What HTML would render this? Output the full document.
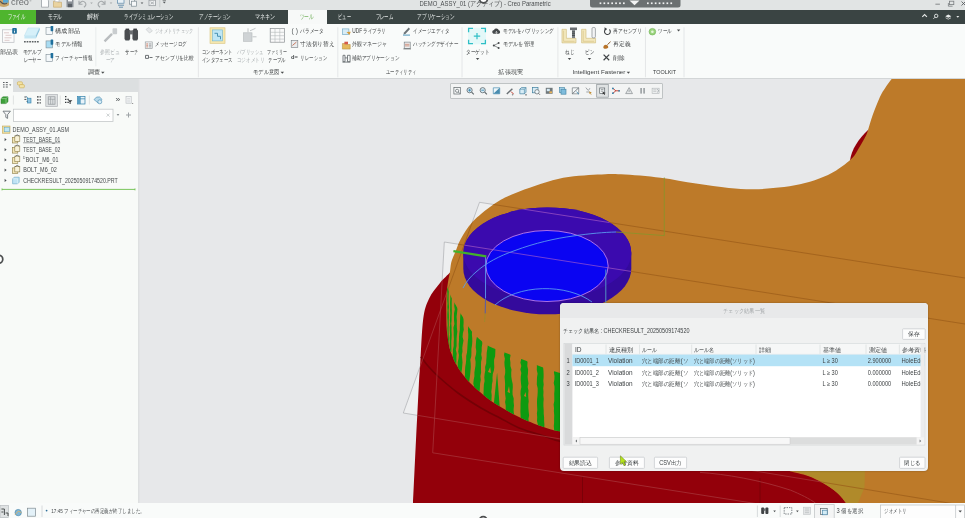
<!DOCTYPE html>
<html lang="ja">
<head>
<meta charset="utf-8">
<title>DEMO_ASSY_01 - Creo Parametric</title>
<style>
*{box-sizing:border-box;margin:0;padding:0}
html,body{width:965px;height:518px;overflow:hidden;background:#e7e8ea;font-family:"Liberation Sans",sans-serif;}
body{position:relative}
.abs{position:absolute}
svg{position:absolute;left:0;top:0;overflow:visible}
svg text{font-family:"Liberation Sans",sans-serif}
#s-title,#s-tabs,#s-ribbon,#s-left,#s-viewtb,#s-dialog,#s-status{filter:blur(0.35px)}
#titlebar{left:0;top:0;width:965px;height:10px;background:#e1e4e4}
#tabbar{left:0;top:10px;width:965px;height:13.7px;background:#3a4443}
#filetab{left:0;top:0;width:36px;height:13.7px;background:#4fb52e}
#activetab{left:288px;top:0;width:39px;height:14px;background:#f7f9f8}
#ribbon{left:0;top:23.7px;width:965px;height:55.3px;background:#f9fbfa;border-bottom:1px solid #d3d6d7}
#leftpanel{left:0;top:79px;width:138px;height:424px;background:#f8faf8}
#lp-tabs{left:0;top:0;width:138px;height:13px;background:#dcdfe0}
#lp-tab1{left:0;top:0;width:13px;height:13px;background:#f8faf8}
#splitter{left:138px;top:79px;width:2px;height:424px;background:linear-gradient(90deg,#dcdedf,#e5e6e8)}
#viewport{left:140px;top:79px;width:825px;height:424px;background:#e7e8ea;overflow:hidden}
#statusbar{left:0;top:503px;width:965px;height:15px;background:#f9fbfa}
#viewtb{left:449.5px;top:82.6px;width:213.8px;height:16px;background:#f3f4f4;border:1px solid #bfc3c4;border-radius:1px}
#dialog{left:560px;top:303px;width:368px;height:168px;background:#f0f1f1;border-radius:4px;box-shadow:0 0 2px rgba(0,0,0,.35);overflow:hidden}
#dlg-title{left:0;top:0;width:368px;height:15px;background:#e8e9ea}
</style>
</head>
<body>
<div id="titlebar" class="abs">
<svg id="s-title" width="965" height="10" viewBox="0 0 965 10">
<g transform="translate(0 -1.8)"><path d="M0 0 h9 v7 q-4 3 -9 1 z" fill="#c9a66a"/><rect x="3.0" y="0.0" width="5.5" height="4.5" fill="#56a7d6"/><path d="M0 3 q3 4 7 2" fill="none" stroke="#555" stroke-width="1.2"/><text x="11.0" y="6.6" font-size="9.5" fill="#6b6e70" textLength="18.0" lengthAdjust="spacingAndGlyphs">creo</text><text x="29.5" y="3.5" font-size="3.0" fill="#6b6e70" textLength="2.0" lengthAdjust="spacingAndGlyphs">®</text><path d="M41.5 0 h4.5 l2.5 2.5 v6.5 h-7 z" fill="#fdfdfd" stroke="#9aa0a4" stroke-width="0.8"/><path d="M53.5 3 h3 l1 1 h4 v5 h-8 z" fill="#ead3a0" stroke="#c4a468" stroke-width="0.6"/><path d="M55 0.5 h4 v3 h-4 z" fill="#fff" stroke="#aaa" stroke-width="0.5"/><path d="M66.5 0 h7 v9 h-7 z" fill="#8a9096"/><rect x="68.0" y="0.0" width="4.0" height="3.2" fill="#f4f6f7"/><rect x="68.0" y="5.6" width="4.0" height="3.4" fill="#5a6066"/><path d="M79 2.5 v3.5 h3.5 M79.4 5.6 q3 -4.5 6 -1 q1.5 2.5 -1.5 4.4" fill="none" stroke="#a4a8aa" stroke-width="1.1"/><path d="M90.2 4.2 h2.6 l-1.3 1.5 z" fill="#a4a8aa"/><path d="M105 2.5 v3.5 h-3.5 M104.6 5.6 q-3 -4.5 -6 -1 q-1.5 2.5 1.5 4.4" fill="none" stroke="#a4a8aa" stroke-width="1.1"/><path d="M109.7 4.2 h2.6 l-1.3 1.5 z" fill="#a4a8aa"/><rect x="117.5" y="0.5" width="6.5" height="4.5" fill="#e8f1f7" stroke="#5a88a8" stroke-width="0.7"/><path d="M118 7 h6 M119 9 h4" fill="none" stroke="#5a88a8" stroke-width="0.9"/><rect x="129.5" y="1.0" width="5.0" height="5.0" fill="#f6f8f9" stroke="#7c8a92" stroke-width="0.7"/><rect x="131.5" y="3.0" width="5.0" height="5.0" fill="#f6f8f9" stroke="#7c8a92" stroke-width="0.7"/><path d="M140.6 4.2 h2.8 l-1.4 1.6 z" fill="#55595b"/><rect x="149.0" y="2.0" width="6.5" height="5.5" fill="#eef0f1" stroke="#8c9296" stroke-width="0.7"/><path d="M150.5 3.5 l3.5 2.5 m0 -2.5 l-3.5 2.5" fill="none" stroke="#8c9296" stroke-width="0.6"/><path d="M159.8 0.5 v8.5" fill="none" stroke="#b6babc" stroke-width="0.6"/><path d="M162.8 3.6 h3.0 l-1.5 1.8 z" fill="#55595b"/><path d="M162.6 2.4 h3.4" fill="none" stroke="#55595b" stroke-width="0.6"/></g>
<text x="419.6" y="6.0" font-size="6.8" fill="#4a4d4f" textLength="131.0" lengthAdjust="spacingAndGlyphs">DEMO_ASSY_01 (アクティブ) - Creo Parametric</text>
<path d="M590 0 h90.5 v5 q0 2.5 -2.5 2.5 h-85.5 q-2.5 0 -2.5 -2.5 z" fill="#6b7071"/>
<rect x="599.6" y="2.4" width="1.7" height="1.7" fill="#f2f3f3"/>
<rect x="647.0" y="2.4" width="1.7" height="1.7" fill="#f2f3f3"/>
<rect x="603.5" y="2.4" width="1.7" height="1.7" fill="#f2f3f3"/>
<rect x="650.9" y="2.4" width="1.7" height="1.7" fill="#f2f3f3"/>
<rect x="607.4" y="2.4" width="1.7" height="1.7" fill="#f2f3f3"/>
<rect x="654.8" y="2.4" width="1.7" height="1.7" fill="#f2f3f3"/>
<rect x="611.3" y="2.4" width="1.7" height="1.7" fill="#f2f3f3"/>
<rect x="658.7" y="2.4" width="1.7" height="1.7" fill="#f2f3f3"/>
<rect x="615.2" y="2.4" width="1.7" height="1.7" fill="#f2f3f3"/>
<rect x="662.6" y="2.4" width="1.7" height="1.7" fill="#f2f3f3"/>
<rect x="619.1" y="2.4" width="1.7" height="1.7" fill="#f2f3f3"/>
<rect x="666.5" y="2.4" width="1.7" height="1.7" fill="#f2f3f3"/>
<rect x="623.0" y="2.4" width="1.7" height="1.7" fill="#f2f3f3"/>
<rect x="670.4" y="2.4" width="1.7" height="1.7" fill="#f2f3f3"/>
<path d="M629.5 0.6 h10 l-5 4.6 z" fill="#f2f3f3"/>
<path d="M935.4 4.2 h4.5" fill="none" stroke="#7a7e80" stroke-width="0.9"/>
<rect x="949.6" y="1.2" width="4.2" height="3.4" fill="none" stroke="#7a7e80" stroke-width="0.8"/>
<path d="M948.4 3 v3.2 h4.2" fill="none" stroke="#7a7e80" stroke-width="0.8"/>
<path d="M961.5 1.5 l4 4 m0 -4 l-4 4" fill="none" stroke="#5a5e60" stroke-width="0.9"/>
</svg>
</div>
<div id="tabbar" class="abs"><div id="filetab" class="abs"></div><div id="activetab" class="abs"></div>
<svg id="s-tabs" width="965" height="14" viewBox="0 10 965 14">
<text x="7.5" y="19.4" font-size="6.6" fill="#eef1f0" textLength="17.5" lengthAdjust="spacingAndGlyphs">ファイル</text>
<text x="48.0" y="19.4" font-size="6.6" fill="#eef1f0" textLength="14.0" lengthAdjust="spacingAndGlyphs">モデル</text>
<text x="87.0" y="19.4" font-size="6.6" fill="#eef1f0" textLength="12.5" lengthAdjust="spacingAndGlyphs">解析</text>
<text x="124.4" y="19.4" font-size="6.6" fill="#eef1f0" textLength="49.0" lengthAdjust="spacingAndGlyphs">ライブシミュレーション</text>
<text x="199.0" y="19.4" font-size="6.6" fill="#eef1f0" textLength="32.0" lengthAdjust="spacingAndGlyphs">アノテーション</text>
<text x="255.0" y="19.4" font-size="6.6" fill="#eef1f0" textLength="20.6" lengthAdjust="spacingAndGlyphs">マネキン</text>
<text x="299.7" y="19.4" font-size="6.6" fill="#6fae58" textLength="14.2" lengthAdjust="spacingAndGlyphs">ツール</text>
<text x="338.3" y="19.4" font-size="6.6" fill="#eef1f0" textLength="12.4" lengthAdjust="spacingAndGlyphs">ビュー</text>
<text x="375.6" y="19.4" font-size="6.6" fill="#eef1f0" textLength="17.4" lengthAdjust="spacingAndGlyphs">フレーム</text>
<text x="417.4" y="19.4" font-size="6.6" fill="#eef1f0" textLength="37.3" lengthAdjust="spacingAndGlyphs">アプリケーション</text>
<path d="M922.3 16.9 l2.3 -2.3 l2.3 2.3" fill="none" stroke="#e8ebea" stroke-width="1.1"/>
<circle cx="936.2" cy="15.9" r="1.7" fill="none" stroke="#e8ebea" stroke-width="0.9"/>
<path d="M935 17.2 l-1.6 1.6" fill="none" stroke="#e8ebea" stroke-width="0.9"/>
<path d="M945.3 16.2 l3 -1.6 l3 1.6 l-3 1.6 z" fill="#e8ebea"/>
<path d="M945.6 17.8 l2.7 1.4 l2.7 -1.4" fill="none" stroke="#e8ebea" stroke-width="0.7"/>
<path d="M956.3 16.0 h3.0 l-1.5 1.8 z" fill="#e8ebea"/>
</svg>
</div>
<div id="ribbon" class="abs">
<svg id="s-ribbon" width="965" height="55.3" viewBox="0 23.7 965 55.3">
<rect x="2.5" y="29.5" width="11.5" height="12.5" fill="#fbfbfb" stroke="#b8bcc0" stroke-width="0.7"/>
<path d="M4 32.5 h5 M5.5 35 h6 M4.5 37.5 h7 M4.5 40 h5" fill="none" stroke="#c7a7a7" stroke-width="0.6"/>
<rect x="12.2" y="27.8" width="4.6" height="5.6" fill="#1f6f9c" rx="0.8"/>
<path d="M14.5 29.4 v0.6 M14.5 30.6 v1.8" fill="none" stroke="#fff" stroke-width="0.9"/>
<text x="0.3" y="53.3" font-size="6.4" fill="#3a3d3e" textLength="18.2" lengthAdjust="spacingAndGlyphs">部品表</text>
<path d="M24.4 35.4 l3.6 -7.8 h11.4 l-3.6 7.8 z" fill="#d6f0f9" stroke="#b4dbea" stroke-width="0.5"/>
<path d="M24.4 35.4 h11.4 v2.8 h-11.4 z" fill="#c4e6f3"/>
<path d="M35.8 35.4 l3.6 -7.8 q0.8 1.4 0 2.8 l-3.6 7.8 z" fill="#8cc3dc"/>
<path d="M24 41.4 h15.6" fill="none" stroke="#5d6264" stroke-width="1.6" stroke-dasharray="1.7 0.9"/>
<text x="22.5" y="53.3" font-size="6.4" fill="#3a3d3e" textLength="19.5" lengthAdjust="spacingAndGlyphs">モデルプ</text>
<text x="23.7" y="61.3" font-size="6.4" fill="#3a3d3e" textLength="17.2" lengthAdjust="spacingAndGlyphs">レーヤー</text>
<path d="M95.8 27 V66" fill="none" stroke="#e6e8e9" stroke-width="0.8"/>
<path d="M104.5 41 l4 -4 M108 37.5 l4 -4" fill="none" stroke="#b9bdbf" stroke-width="2.4"/>
<rect x="112.5" y="28.0" width="4.6" height="6.0" fill="#c9cdcf" rx="0.8"/>
<text x="100.3" y="53.3" font-size="6.4" fill="#a9aeb0" textLength="19.7" lengthAdjust="spacingAndGlyphs">参照ビュ</text>
<text x="105.5" y="61.3" font-size="6.4" fill="#a9aeb0" textLength="9.3" lengthAdjust="spacingAndGlyphs">ーア</text>
<rect x="125.6" y="28.3" width="3.5" height="3.0" fill="#33363a"/>
<rect x="133.4" y="28.3" width="3.5" height="3.0" fill="#33363a"/>
<rect x="125.3" y="37.5" width="4.0" height="3.0" fill="#8b8f92"/>
<rect x="133.2" y="37.5" width="4.0" height="3.0" fill="#8b8f92"/>
<text x="125.3" y="53.3" font-size="6.4" fill="#3a3d3e" textLength="12.9" lengthAdjust="spacingAndGlyphs">サーチ</text>
<rect x="145.2" y="41.6" width="7.0" height="6.6" fill="#f1f3f4" stroke="#8d9397" stroke-width="0.6"/>
<path d="M146.4 43.6 h1.4 M146.4 45 h1.4 M146.4 46.6 h1.4" fill="none" stroke="#c05a3a" stroke-width="0.8"/>
<path d="M148.8 43.6 h2.6 M148.8 45 h2.6 M148.8 46.6 h2.6" fill="none" stroke="#70767a" stroke-width="0.6"/>
<text x="88.2" y="73.7" font-size="6.4" fill="#3a3d3e" textLength="12.5" lengthAdjust="spacingAndGlyphs">調査</text>
<path d="M101.1 71.4 h3.4 l-1.7 2.0 z" fill="#4a4d4e"/>
<path d="M198.4 27 V77" fill="none" stroke="#dfe2e3" stroke-width="0.8"/>
<rect x="210.0" y="27.5" width="15.0" height="15.5" fill="#f6e7ae" stroke="#d8c27a" stroke-width="0.6"/>
<rect x="212.6" y="29.6" width="9.8" height="11.0" fill="#bfe6f4" stroke="#6fb5d2" stroke-width="0.6"/>
<path d="M214.5 33 h3 v3 h3 v3" fill="none" stroke="#3c89ab" stroke-width="0.9"/>
<text x="202.0" y="53.3" font-size="6.4" fill="#3a3d3e" textLength="30.5" lengthAdjust="spacingAndGlyphs">コンポーネント</text>
<text x="202.0" y="61.3" font-size="6.4" fill="#3a3d3e" textLength="30.5" lengthAdjust="spacingAndGlyphs">インタフェース</text>
<rect x="243.5" y="32.5" width="8.5" height="8.5" fill="#cfd3d5" stroke="#b3b8ba" stroke-width="0.6"/>
<path d="M248 32 v-4 M252.5 36.5 h4 M250 30.5 l5.5 -2.5" fill="none" stroke="#bcc0c2" stroke-width="0.9"/>
<text x="237.0" y="53.3" font-size="6.4" fill="#a9aeb0" textLength="26.6" lengthAdjust="spacingAndGlyphs">パブリッシュ</text>
<text x="236.6" y="61.3" font-size="6.4" fill="#a9aeb0" textLength="27.8" lengthAdjust="spacingAndGlyphs">コジオメトリ</text>
<rect x="270.2" y="28.3" width="14.4" height="13.6" fill="#fafafa" stroke="#8a8f93" stroke-width="0.7"/>
<path d="M270.2 32 h14.4 M270.2 35.4 h14.4 M270.2 38.8 h14.4 M275 28.3 v13.6 M279.8 28.3 v13.6" fill="none" stroke="#b4b8bb" stroke-width="0.6"/>
<text x="266.7" y="53.3" font-size="6.4" fill="#3a3d3e" textLength="19.8" lengthAdjust="spacingAndGlyphs">ファミリー</text>
<text x="268.2" y="61.3" font-size="6.4" fill="#3a3d3e" textLength="17.6" lengthAdjust="spacingAndGlyphs">テーブル</text>
<text x="253.0" y="73.7" font-size="6.4" fill="#3a3d3e" textLength="26.5" lengthAdjust="spacingAndGlyphs">モデル意図</text>
<path d="M280.6 71.4 h3.4 l-1.7 2.0 z" fill="#4a4d4e"/>
<path d="M337.8 27 V77" fill="none" stroke="#dfe2e3" stroke-width="0.8"/>
<rect x="342.3" y="28.6" width="6.6" height="5.8" fill="#d7ecf6" stroke="#6aa3c0" stroke-width="0.6"/>
<path d="M346.5 31.6 l3 3 l1.2 -3.2 z" fill="#d59a3a"/>
<path d="M342.4 43.2 h3 l0.8 1 h4 v4.6 h-7.8 z" fill="#e5b95c" stroke="#ab8536" stroke-width="0.5"/>
<rect x="344.4" y="41.4" width="3.6" height="2.6" fill="#d65a4a"/>
<path d="M343 55 h2 v6.4 h-2 z M347.5 55 h2.6 v6.4 h-2.6 z M342.4 61.8 h8" fill="none" stroke="#5d6367" stroke-width="0.8"/>
<path d="M345 57.6 h2.5" fill="none" stroke="#5d6367" stroke-width="0.8"/>
<path d="M403.4 34.2 l2 -0.6 l4.6 -5 l-1.3 -1.3 l-4.7 5 z" fill="#6b7377"/>
<path d="M403 34.8 h7" fill="none" stroke="#3f8fb5" stroke-width="0.9"/>
<rect x="404.2" y="41.8" width="6.0" height="6.2" fill="#eceff0" stroke="#6f7579" stroke-width="0.6"/>
<path d="M405 44 h4.4 M405 45.6 h4.4" fill="none" stroke="#c05a3a" stroke-width="0.6"/>
<path d="M403.4 48.6 h7.6" fill="none" stroke="#5d6367" stroke-width="0.8"/>
<text x="386.0" y="73.7" font-size="6.4" fill="#3a3d3e" textLength="30.5" lengthAdjust="spacingAndGlyphs">ユーティリティ</text>
<path d="M462.0 27 V77" fill="none" stroke="#dfe2e3" stroke-width="0.8"/>
<rect x="468.0" y="27.5" width="18.0" height="16.5" fill="#e3f8f8"/>
<path d="M468.6 32 v-4 h4.4 M485.4 32 v-4 h-4.4 M468.6 39.4 v4 h4.4 M485.4 39.4 v4 h-4.4" fill="none" stroke="#2fbfc6" stroke-width="1.3"/>
<path d="M477 32.6 v6.4 M473.8 35.8 h6.4" fill="none" stroke="#2fbfc6" stroke-width="1.2"/>
<text x="466.0" y="53.3" font-size="6.4" fill="#3a3d3e" textLength="23.2" lengthAdjust="spacingAndGlyphs">ターゲット</text>
<path d="M475.9 57.6 h3.4 l-1.7 2.0 z" fill="#4a4d4e"/>
<path d="M493.4 33.4 a2 2 0 0 1 0.6 -3.8 a2.6 2.6 0 0 1 4.8 0.4 a1.8 1.8 0 0 1 0.2 3.4 z" fill="#45494b"/>
<path d="M496.4 33.6 v-2.4 m-1 1 l1 -1 l1 1" fill="none" stroke="#fff" stroke-width="0.6"/>
<circle cx="493.8" cy="45.2" r="1" fill="#45494b"/><circle cx="498.6" cy="42.8" r="1" fill="#45494b"/><circle cx="498.6" cy="47.6" r="1" fill="#45494b"/>
<path d="M493.8 45.2 l4.8 -2.4 M493.8 45.2 l4.8 2.4" fill="none" stroke="#45494b" stroke-width="0.6"/>
<text x="498.4" y="73.7" font-size="6.4" fill="#3a3d3e" textLength="24.5" lengthAdjust="spacingAndGlyphs">拡張現実</text>
<path d="M557.9 27 V77" fill="none" stroke="#dfe2e3" stroke-width="0.8"/>
<path d="M562.0 29 h4.4 v9 h9.6 v4.6 h-14 z" fill="#f3e8bd" stroke="#cdb977" stroke-width="0.6"/><path d="M563.6 30.4 v10.6 h11" fill="none" stroke="#d3be7c" stroke-width="0.6"/><rect x="570.0" y="27.2" width="7.0" height="2.6" fill="#6a6f72"/><rect x="572.0" y="29.8" width="3.0" height="8.0" fill="#7b8084"/><path d="M572.0 31.6 h3 M572.0 33.4 h3 M572.0 35.2 h3" fill="none" stroke="#2c3033" stroke-width="0.6"/>
<text x="565.2" y="53.3" font-size="6.4" fill="#3a3d3e" textLength="8.8" lengthAdjust="spacingAndGlyphs">ねじ</text>
<path d="M567.8 57.6 h3.4 l-1.7 2.0 z" fill="#4a4d4e"/>
<path d="M581.6 29 h4.4 v9 h9.6 v4.6 h-14 z" fill="#f3e8bd" stroke="#cdb977" stroke-width="0.6"/><path d="M583.2 30.4 v10.6 h11" fill="none" stroke="#d3be7c" stroke-width="0.6"/><rect x="592.0" y="27.2" width="3.4" height="10.4" fill="#f3f4f5" stroke="#6f7579" stroke-width="0.6" rx="1.2"/>
<text x="585.2" y="53.3" font-size="6.4" fill="#3a3d3e" textLength="8.8" lengthAdjust="spacingAndGlyphs">ピン</text>
<path d="M587.8 57.6 h3.4 l-1.7 2.0 z" fill="#4a4d4e"/>
<path d="M609.4 29.2 a2.9 2.9 0 1 1 -3 -0.6" fill="none" stroke="#3f4345" stroke-width="1.1"/>
<path d="M604.6 27 l2.4 1.6 l-2.4 1.8 z" fill="#3f4345"/>
<path d="M603.4 47.6 q-0.4 -3 2.6 -3.2 q2.6 0.6 2.2 3 q-2.4 2 -4.8 0.2 z" fill="#b8742a"/>
<path d="M607.4 44.4 l3.2 -3" fill="none" stroke="#8b5a2b" stroke-width="1"/>
<text x="572.6" y="73.7" font-size="6.2" fill="#3a3d3e" textLength="52.8" lengthAdjust="spacingAndGlyphs">Intelligent Fastener</text>
<path d="M626.7 71.4 h3.4 l-1.7 2.0 z" fill="#4a4d4e"/>
<path d="M645.5 27 V77" fill="none" stroke="#dfe2e3" stroke-width="0.8"/>
<circle cx="652.4" cy="31.4" r="3.3" fill="#9bd47e" stroke="#6bb04f" stroke-width="0.6"/><circle cx="652.4" cy="31.4" r="1.3" fill="#e6f5dc"/>
<text x="653.0" y="73.7" font-size="6.2" fill="#3a3d3e" textLength="23.2" lengthAdjust="spacingAndGlyphs">TOOLKIT</text>
<path d="M684.0 27 V77" fill="none" stroke="#dfe2e3" stroke-width="0.8"/>
<g transform="translate(0 -1.4)"><rect x="46.0" y="28.5" width="6.5" height="7.0" fill="#f4f8fa" stroke="#7d8c94" stroke-width="0.6"/><rect x="50.6" y="27.1" width="2.6" height="5.2" fill="#1f6f9c" rx="0.6"/><text x="55.2" y="33.8" font-size="6.4" fill="#3a3d3e" textLength="24.8" lengthAdjust="spacingAndGlyphs">構成部品</text><rect x="46.0" y="42.0" width="6.5" height="7.0" fill="#a9dcf2" stroke="#7d8c94" stroke-width="0.6"/><rect x="50.6" y="40.6" width="2.6" height="5.2" fill="#1f6f9c" rx="0.6"/><text x="55.2" y="47.5" font-size="6.4" fill="#3a3d3e" textLength="27.2" lengthAdjust="spacingAndGlyphs">モデル情報</text><rect x="46.0" y="55.5" width="6.5" height="7.0" fill="#f4f8fa" stroke="#7d8c94" stroke-width="0.6"/><rect x="50.6" y="54.1" width="2.6" height="5.2" fill="#1f6f9c" rx="0.6"/><text x="55.2" y="60.9" font-size="6.4" fill="#3a3d3e" textLength="37.0" lengthAdjust="spacingAndGlyphs">フィーチャー情報</text><rect x="124.5" y="30.5" width="5.6" height="10.5" fill="#4a4d50" rx="1.5"/><rect x="132.4" y="30.5" width="5.6" height="10.5" fill="#4a4d50" rx="1.5"/><rect x="129.5" y="31.5" width="3.5" height="4.0" fill="#6a6d70"/><path d="M146 30.5 l3 -2 l3.4 3.6 l-3 2 z" fill="#e8eaeb" stroke="#c3c7c9" stroke-width="0.6"/><text x="155.2" y="33.8" font-size="6.4" fill="#a9aeb0" textLength="38.0" lengthAdjust="spacingAndGlyphs">ジオメトリチェック</text><text x="155.2" y="47.5" font-size="6.4" fill="#3a3d3e" textLength="31.3" lengthAdjust="spacingAndGlyphs">メッセージログ</text><path d="M145.5 56.5 h3 v3 h-3 z M149.5 58.6 h3" fill="none" stroke="#5d6367" stroke-width="0.9"/><text x="155.2" y="60.9" font-size="6.4" fill="#3a3d3e" textLength="38.8" lengthAdjust="spacingAndGlyphs">アセンブリを比較</text><text x="291.5" y="33.9" font-size="6.6" fill="#555a5c" textLength="6.4" lengthAdjust="spacingAndGlyphs">( )</text><text x="300.5" y="33.8" font-size="6.4" fill="#3a3d3e" textLength="23.0" lengthAdjust="spacingAndGlyphs">パラメータ</text><rect x="291.2" y="41.8" width="6.6" height="6.6" fill="#e9ecee" stroke="#70767a" stroke-width="0.6"/><path d="M292.4 46.6 l4 -3.4" fill="none" stroke="#c05a3a" stroke-width="0.8"/><text x="300.5" y="47.5" font-size="6.4" fill="#3a3d3e" textLength="34.0" lengthAdjust="spacingAndGlyphs">寸法切り替え</text><text x="291.0" y="60.6" font-size="6.2" fill="#45494b" textLength="6.8" lengthAdjust="spacingAndGlyphs" font-weight="bold">d=</text><text x="300.5" y="60.9" font-size="6.4" fill="#3a3d3e" textLength="26.7" lengthAdjust="spacingAndGlyphs">リレーション</text><text x="352.3" y="33.8" font-size="6.4" fill="#3a3d3e" textLength="33.7" lengthAdjust="spacingAndGlyphs">UDF ライブラリ</text><text x="352.3" y="47.5" font-size="6.4" fill="#3a3d3e" textLength="35.0" lengthAdjust="spacingAndGlyphs">外観マネージャ</text><text x="352.3" y="60.9" font-size="6.4" fill="#3a3d3e" textLength="47.0" lengthAdjust="spacingAndGlyphs">補助アプリケーション</text><text x="413.3" y="33.8" font-size="6.4" fill="#3a3d3e" textLength="35.8" lengthAdjust="spacingAndGlyphs">イメージエディタ</text><text x="413.3" y="47.5" font-size="6.4" fill="#3a3d3e" textLength="45.0" lengthAdjust="spacingAndGlyphs">ハッチングデザイナー</text><text x="503.0" y="33.8" font-size="6.4" fill="#3a3d3e" textLength="51.0" lengthAdjust="spacingAndGlyphs">モデルをパブリッシング</text><text x="503.0" y="47.5" font-size="6.4" fill="#3a3d3e" textLength="31.0" lengthAdjust="spacingAndGlyphs">モデルを管理</text><text x="613.2" y="33.8" font-size="6.4" fill="#3a3d3e" textLength="28.8" lengthAdjust="spacingAndGlyphs">再アセンブリ</text><text x="613.2" y="47.5" font-size="6.4" fill="#3a3d3e" textLength="17.2" lengthAdjust="spacingAndGlyphs">再定義</text><path d="M603.6 55.8 l5.6 5.6 m0 -5.6 l-5.6 5.6" fill="none" stroke="#3f4345" stroke-width="1.2"/><text x="613.2" y="60.9" font-size="6.4" fill="#3a3d3e" textLength="11.4" lengthAdjust="spacingAndGlyphs">削除</text><text x="658.4" y="33.8" font-size="6.4" fill="#3a3d3e" textLength="13.6" lengthAdjust="spacingAndGlyphs">ツール</text><path d="M676.9 30.6 h3.4 l-1.7 2.0 z" fill="#4a4d4e"/></g>
</svg>
</div>
<div id="leftpanel" class="abs"><div id="lp-tabs" class="abs"><div id="lp-tab1" class="abs"></div></div>
<svg id="s-left" width="138" height="424" viewBox="0 79 138 424">
<path d="M3 82.5 h1.6 M3 84.8 h1.6 M3 87 h1.6 M5.8 82.5 h2 M5.8 84.8 h2 M5.8 87 h2" fill="none" stroke="#4a4f52" stroke-width="0.9"/>
<path d="M9.1 84.4 h2.2 l-1.1 1.3 z" fill="#4a4d4e"/>
<rect x="17.4" y="81.8" width="5.0" height="3.2" fill="#f3e3a6" stroke="#c9a94e" stroke-width="0.6" rx="1"/>
<rect x="19.4" y="84.6" width="5.0" height="3.2" fill="#f3e3a6" stroke="#c9a94e" stroke-width="0.6" rx="1"/>
<path d="M1 98.6 l2 -1.8 h5 v5 l-2 1.8 h-5 z" fill="#3da03a" stroke="#2a7a2a" stroke-width="0.5"/>
<path d="M1 98.6 h5 v5 M6 98.6 l2 -1.8" fill="none" stroke="#bfe6b8" stroke-width="0.5"/>
<path d="M13.4 95.5 v9" fill="none" stroke="#d5d8d9" stroke-width="0.7"/>
<path d="M24.4 97 h2 M24.4 99.4 h2 M26.6 101.4 h2" fill="none" stroke="#4a4f52" stroke-width="1"/>
<rect x="27.6" y="98.2" width="3.4" height="4.8" fill="#8fc4e2" stroke="#2f7fa8" stroke-width="0.6"/>
<path d="M26 96.4 l2 1.4" fill="none" stroke="#2f7fa8" stroke-width="0.6"/>
<path d="M37 96.8 h1.6 M37 99.8 h1.6 M37 102.8 h1.6 M39.6 96.8 h1.2 M39.6 99.8 h1.2 M39.6 102.8 h1.2" fill="none" stroke="#33373a" stroke-width="1.3"/>
<rect x="45.8" y="94.6" width="11.6" height="11.8" fill="#dfe2e3" stroke="#aeb3b6" stroke-width="0.7"/>
<rect x="48.2" y="96.8" width="6.8" height="7.4" fill="none" stroke="#8f9599" stroke-width="0.7"/>
<path d="M48.2 99.2 h6.8 M50.6 96.8 v7.4 M52.8 99.2 v5" fill="none" stroke="#8f9599" stroke-width="0.6"/>
<path d="M60.2 95.5 v9" fill="none" stroke="#d5d8d9" stroke-width="0.7"/>
<path d="M65 96.6 h1.4 M65 99.4 h1.4 M65 102.4 h1.4 M67.4 99.4 h1.4 M67.4 102.4 h1.4" fill="none" stroke="#33373a" stroke-width="1.1"/>
<path d="M67.8 100.2 h4.6 l-1.8 1.8 v2 h-1 v-2 z" fill="#33373a"/>
<rect x="77.6" y="96.4" width="7.4" height="7.6" fill="#e8f3f9" stroke="#2f7fa8" stroke-width="0.7"/>
<path d="M77.6 98.8 h7.4 M80.2 96.4 v7.6" fill="none" stroke="#2f7fa8" stroke-width="0.7"/>
<rect x="77.6" y="96.4" width="2.6" height="7.6" fill="#5aa0c4"/>
<path d="M89.4 95.5 v9" fill="none" stroke="#d5d8d9" stroke-width="0.7"/>
<path d="M94 99.6 l2.6 -2.6 h3 l2.4 2.4 l-3.6 3.8 z" fill="#b7d9ea" stroke="#3f87ad" stroke-width="0.6"/>
<circle cx="99.8" cy="101.8" r="2" fill="#d7ecf6" stroke="#3f87ad" stroke-width="0.6"/>
<text x="115.4" y="102.2" font-size="7.0" fill="#4a4f52" textLength="4.8" lengthAdjust="spacingAndGlyphs">»</text>
<rect x="126.0" y="96.6" width="5.2" height="6.6" fill="#f2f4f5" stroke="#b5babd" stroke-width="0.6"/>
<path d="M127.2 98.6 h2.8 M127.2 100.2 h2.8 M127.2 101.8 h2.8" fill="none" stroke="#c3c7c9" stroke-width="0.5"/>
<path d="M131.7 103.0 h1.8 l-0.9 1.1 z" fill="#777"/>
<path d="M3 111.2 h7.4 l-2.8 3.4 v3.8 l-1.8 -1 v-2.8 z" fill="#f4f6f7" stroke="#5d6569" stroke-width="0.8"/>
<rect x="13.4" y="109.2" width="99.6" height="12.2" fill="#ffffff" stroke="#c3c7c9" stroke-width="0.8"/>
<path d="M106.6 113.6 l3 3 m0 -3 l-3 3" fill="none" stroke="#b9bec0" stroke-width="0.7"/>
<path d="M116.7 114.2 h2.6 l-1.3 1.6 z" fill="#5d6569"/>
<path d="M126 115 h5 M128.5 112.5 v5" fill="none" stroke="#9ea3a6" stroke-width="1"/>
<rect x="2.4" y="126.0" width="7.6" height="7.2" fill="#f1df9e" stroke="#b99a44" stroke-width="0.5"/><rect x="4.2" y="127.2" width="5.2" height="4.6" fill="#bfe6f4" stroke="#5a9fc0" stroke-width="0.5"/>
<text x="12.6" y="131.9" font-size="6.5" fill="#45494b" textLength="56.4" lengthAdjust="spacingAndGlyphs">DEMO_ASSY_01.ASM</text>
<path d="M4.6 138.0 l2 1.6 l-2 1.6 z" fill="#4a4f52"/>
<rect x="12.4" y="137.4" width="5.4" height="5.6" fill="#f3e7b8" stroke="#8a7a44" stroke-width="0.6"/><rect x="14.8" y="135.8" width="5.0" height="5.6" fill="#f8f2d8" stroke="#8a7a44" stroke-width="0.6"/><path d="M15.2 136.2 l2 -1.4 l2 1.4" fill="none" stroke="#4a4f52" stroke-width="0.7"/>
<text x="23.2" y="141.9" font-size="6.5" fill="#45494b" textLength="37.0" lengthAdjust="spacingAndGlyphs">TEST_BASE_01</text>
<path d="M23.2 142.8 h37.0" fill="none" stroke="#45494b" stroke-width="0.5"/>
<path d="M4.6 148.1 l2 1.6 l-2 1.6 z" fill="#4a4f52"/>
<rect x="12.4" y="147.5" width="5.4" height="5.6" fill="#f3e7b8" stroke="#8a7a44" stroke-width="0.6"/><rect x="14.8" y="145.9" width="5.0" height="5.6" fill="#f8f2d8" stroke="#8a7a44" stroke-width="0.6"/><path d="M15.2 146.3 l2 -1.4 l2 1.4" fill="none" stroke="#4a4f52" stroke-width="0.7"/>
<text x="23.2" y="152.0" font-size="6.5" fill="#45494b" textLength="37.0" lengthAdjust="spacingAndGlyphs">TEST_BASE_02</text>
<path d="M4.6 158.3 l2 1.6 l-2 1.6 z" fill="#4a4f52"/>
<rect x="12.4" y="157.7" width="5.4" height="5.6" fill="#f3e7b8" stroke="#8a7a44" stroke-width="0.6"/><rect x="14.8" y="156.1" width="5.0" height="5.6" fill="#f8f2d8" stroke="#8a7a44" stroke-width="0.6"/><path d="M15.2 156.5 l2 -1.4 l2 1.4" fill="none" stroke="#4a4f52" stroke-width="0.7"/>
<text x="23.0" y="159.3" font-size="3.6" fill="#45494b" textLength="2.4" lengthAdjust="spacingAndGlyphs">D</text>
<text x="25.8" y="162.2" font-size="6.5" fill="#45494b" textLength="32.6" lengthAdjust="spacingAndGlyphs">BOLT_M6_01</text>
<path d="M4.6 168.5 l2 1.6 l-2 1.6 z" fill="#4a4f52"/>
<rect x="12.4" y="167.9" width="5.4" height="5.6" fill="#f3e7b8" stroke="#8a7a44" stroke-width="0.6"/><rect x="14.8" y="166.3" width="5.0" height="5.6" fill="#f8f2d8" stroke="#8a7a44" stroke-width="0.6"/><path d="M15.2 166.7 l2 -1.4 l2 1.4" fill="none" stroke="#4a4f52" stroke-width="0.7"/>
<text x="23.2" y="172.4" font-size="6.5" fill="#45494b" textLength="33.6" lengthAdjust="spacingAndGlyphs">BOLT_M6_02</text>
<path d="M4.6 178.8 l2 1.6 l-2 1.6 z" fill="#4a4f52"/>
<path d="M12.6 178.8 l1.6 -1.6 h5 v5 l-1.6 1.6 h-5 z" fill="#bfe3f4" stroke="#4f97ba" stroke-width="0.5"/><path d="M12.6 178.8 h5 v5" fill="none" stroke="#eaf6fb" stroke-width="0.5"/>
<text x="23.2" y="182.7" font-size="6.5" fill="#45494b" textLength="94.6" lengthAdjust="spacingAndGlyphs">CHECKRESULT_20250509174520.PRT</text>
<path d="M2 189.4 H135" fill="none" stroke="#6cc04a" stroke-width="0.9"/>
<path d="M2 188.4 v2 M135 188.4 v2" fill="none" stroke="#6cc04a" stroke-width="0.8"/>
</svg>
</div>
<div id="splitter" class="abs"></div>
<div id="viewport" class="abs">
<svg id="model" width="825" height="424" viewBox="140 79 825 424">
<defs>
<g id="wire" fill="none">
<path d="M965 278 L479.5 202.3 L403.3 413 L965 505.7"/>
<path d="M965 324 L444.3 242 L432.7 452.8 L760 504.2"/>
</g>
<clipPath id="cpOrange"><path id="orangeShape" d="M449.4 348 C449.0 345.0 447.3 336.2 446.8 330.0 C446.3 323.8 446.4 316.8 446.3 311.0 C446.2 305.2 446.2 299.8 446.5 295.0 C446.8 290.2 447.4 285.7 448.0 282.0 C448.6 278.3 449.2 276.1 449.8 272.8 C450.4 269.5 450.4 265.7 451.3 262.2 C452.2 258.7 453.9 255.5 455.5 251.6 C457.1 247.7 458.0 243.8 460.8 238.9 C463.6 234.0 467.2 227.6 472.5 221.9 C477.8 216.2 485.6 209.7 492.7 204.9 C499.8 200.1 504.1 197.5 515.0 193.2 C525.9 188.9 544.2 182.1 558.0 179.0 C571.8 175.9 587.0 175.4 597.5 174.6 C608.0 173.8 610.5 173.7 621.0 174.2 C631.5 174.7 648.1 176.1 660.6 177.7 C673.1 179.3 684.6 181.9 696.0 183.6 C707.4 185.3 719.2 186.9 728.8 187.9 C738.4 188.9 745.4 189.4 753.7 189.3 C762.0 189.2 770.8 188.4 778.5 187.6 C786.2 186.8 793.2 185.7 800.0 184.2 C806.8 182.7 813.3 180.7 819.3 178.4 C825.3 176.1 830.8 173.8 836.2 170.4 C841.7 167.1 848.3 161.9 852.0 158.3 C855.7 154.7 856.6 151.9 858.5 148.8 C860.4 145.8 862.1 142.8 863.6 140.0 C865.1 137.2 865.9 136.2 867.4 132.0 C868.9 127.8 870.6 120.9 872.7 115.1 C874.8 109.3 877.7 101.9 879.8 97.3 C881.9 92.7 883.4 90.7 885.5 87.5 C887.6 84.3 891.2 79.6 892.4 78.0 L965 78 L965 503 L846 503 C844.6 501.3 841.1 496.3 837.4 493.0 C833.7 489.7 828.5 486.2 823.6 483.4 C818.7 480.6 813.5 478.0 808.0 476.0 C802.5 474.0 793.5 472.2 790.6 471.5 C785.5 469.2 778.4 462.2 760.0 458.0 C741.6 453.8 706.7 449.3 680.0 446.0 C653.3 442.7 619.9 440.4 600.0 438.0 C580.1 435.6 569.8 433.2 560.7 431.5 C551.6 429.8 552.3 430.0 545.6 427.7 C538.9 425.4 528.9 421.7 520.5 417.7 C512.1 413.7 501.8 407.8 495.0 403.5 C488.2 399.2 484.8 396.1 480.0 392.0 C475.2 387.9 470.5 383.7 466.5 379.0 C462.5 374.3 458.9 369.2 456.0 364.0 C453.1 358.8 450.5 350.7 449.4 348.0 Z"/></clipPath>
<clipPath id="cpRed"><path id="redShape" d="M449.8 272.8 C448.2 274.5 443.5 278.7 440.0 283.0 C436.5 287.3 431.8 292.7 429.0 298.7 C426.2 304.7 424.6 308.4 423.2 319.0 C421.8 329.6 421.0 351.4 420.3 362.5 C419.6 373.6 419.5 372.8 418.8 385.7 C418.1 398.6 417.0 420.4 416.0 440.0 C415.0 459.6 413.5 492.5 413.0 503.0 L850 503 L850 300 Z"/></clipPath>
</defs>
<!-- wireframe on background -->
<path d="M479.5 202.3 L965 278 L965 505.7 L403.3 413 Z" fill="#ffffff" fill-opacity="0.3"/>
<path d="M444.3 242 L965 324 L965 536 L432.7 452.8 Z" fill="#ffffff" fill-opacity="0.3"/>
<use href="#wire" stroke="#a3a5a8" stroke-width="0.6"/>
<!-- red body -->
<use href="#redShape" fill="#93000a"/>
<path d="M850 160.5 C851.5 150 858 139 868.5 129.5 L872 150 L856 166 Z" fill="#93000a"/>
<path d="M420.9 356.7 C422.1 358.2 425.2 362.8 428.0 366.0 C430.8 369.2 432.7 371.5 437.7 376.0 C442.7 380.5 450.8 387.7 458.0 393.0 C465.2 398.3 474.0 403.8 481.0 408.0 C488.0 412.2 493.4 414.6 500.0 418.0 C506.6 421.4 512.9 425.4 520.5 428.5 C528.1 431.6 538.9 434.3 545.6 436.5 C552.3 438.7 551.6 439.4 560.7 441.5 C569.8 443.6 593.5 447.8 600.0 449.0" fill="none" stroke="#740006" stroke-width="1.6"/>
<g clip-path="url(#cpRed)"><use href="#wire" stroke="#ad4348" stroke-width="0.6"/>
<path d="M582.5 477 L582.5 503 M760 478 L760 503" stroke="#740006" stroke-width="0.8"/>
<path d="M700 472.4 C725 474 760 480 790.6 490.2 C800 494 810 499 815.4 503" fill="none" stroke="#a8363c" stroke-width="0.8"/>
</g>
<!-- orange plate + boss -->
<use href="#orangeShape" fill="#bd7a29"/>

<defs>
<clipPath id="cpGreen" clip-path="url(#cpOrange)"><path d="M446 283 C446.2 283.7 446.6 284.9 447.3 287.0 C448.1 289.1 449.1 292.6 450.5 295.5 C451.9 298.4 453.4 301.1 455.4 304.5 C457.3 307.9 459.8 311.9 462.2 316.0 C464.6 320.1 467.3 325.2 470.0 329.0 C472.7 332.8 475.4 335.6 478.6 338.5 C481.8 341.4 484.6 344.0 489.4 346.5 C494.2 349.0 501.5 351.2 507.3 353.5 C513.1 355.8 518.5 357.8 524.0 360.0 C529.5 362.2 534.8 364.4 540.4 366.5 C546.0 368.6 550.8 370.3 557.4 372.3 C564.0 374.3 576.2 377.5 580.0 378.5 L580 460 L440 460 L440 283 Z"/></clipPath>
<clipPath id="cpHead"><path id="headShape" d="M463.3 253 A84 45.6 0 0 1 631.3 253 L631.3 268.7 A84 45.6 0 0 1 463.3 268.7 Z"/></clipPath>
</defs>
<!-- olive face lower right -->
<path d="M790 470 L865 470 L864.5 487.5 L858 503 L846 503 C838 490 815 475 790 470 Z" fill="#b08a2a"/>
<g clip-path="url(#cpOrange)"><use href="#wire" stroke="#9a5a18" stroke-width="0.7"/></g>
<!-- green stripes -->
<g clip-path="url(#cpGreen)" fill="#0e9a10">
<polygon points="447.3,275.0 447.3,278.6 447.2,282.1 447.5,285.6 447.2,289.2 447.4,292.8 447.4,296.3 447.2,299.9 447.5,303.4 447.3,306.9 447.5,310.5 447.3,314.1 447.3,317.6 447.5,321.1 447.7,324.7 447.4,328.2 447.5,331.8 447.7,335.4 447.9,338.9 447.7,342.4 447.7,346.0 448.8,346.0 448.8,342.4 448.9,338.9 448.7,335.4 448.6,331.8 448.6,328.2 448.8,324.7 448.7,321.1 448.9,317.6 448.8,314.1 448.6,310.5 449.0,306.9 448.7,303.4 448.6,299.9 448.6,296.3 448.7,292.8 449.0,289.2 448.6,285.6 449.0,282.1 448.7,278.6 448.8,275.0"/>
<polygon points="450.5,278.0 450.3,281.5 450.4,285.0 450.3,288.6 450.2,292.1 450.4,295.6 450.3,299.1 450.1,302.7 450.2,306.2 450.1,309.7 450.3,313.2 450.1,316.8 449.9,320.3 450.2,323.8 449.7,327.3 449.8,330.9 450.0,334.4 449.6,337.9 449.8,341.4 449.5,345.0 449.8,348.5 449.6,352.0 451.3,352.0 451.4,348.5 451.3,345.0 451.3,341.4 451.6,337.9 451.7,334.4 451.5,330.9 451.6,327.3 451.3,323.8 451.6,320.3 451.6,316.8 451.8,313.2 451.8,309.7 451.7,306.2 451.7,302.7 451.8,299.1 451.9,295.6 451.7,292.1 452.0,288.6 451.9,285.0 452.0,281.5 451.9,278.0"/>
<polygon points="455.3,287.6 454.6,291.3 455.0,294.9 454.5,298.6 454.4,302.2 454.2,305.9 454.8,309.5 454.0,313.2 454.0,316.8 454.0,320.5 454.4,324.1 453.4,327.8 453.7,331.5 453.7,335.1 453.9,338.8 453.7,342.4 453.7,346.1 452.9,349.7 452.9,353.4 452.7,357.0 453.2,360.7 453.1,364.3 452.5,368.0 455.9,368.0 456.3,364.3 456.4,360.7 456.4,357.0 456.7,353.4 455.8,349.7 456.6,346.1 456.6,342.4 456.6,338.8 456.9,335.1 457.3,331.5 456.9,327.8 456.8,324.1 456.9,320.5 456.6,316.8 457.0,313.2 457.4,309.5 457.4,305.9 457.2,302.2 457.3,298.6 457.3,294.9 457.4,291.3 457.8,287.6"/>
<polygon points="461.8,297.0 461.5,300.6 461.3,304.3 460.7,307.9 461.1,311.5 460.3,315.2 460.1,318.8 460.0,322.4 459.8,326.0 459.8,329.7 459.3,333.3 459.0,336.9 459.0,340.6 458.7,344.2 458.8,347.8 458.2,351.5 458.9,355.1 458.5,358.7 457.7,362.3 457.7,366.0 457.6,369.6 457.4,373.2 456.9,376.9 457.1,380.5 461.2,380.5 461.2,376.9 461.2,373.2 461.9,369.6 462.2,366.0 462.5,362.3 462.2,358.7 461.8,355.1 462.5,351.5 462.3,347.8 462.8,344.2 463.5,340.6 462.6,336.9 462.9,333.3 463.8,329.7 463.4,326.0 463.6,322.4 463.5,318.8 463.7,315.2 464.3,311.5 464.4,307.9 465.1,304.3 465.2,300.6 464.9,297.0"/>
<polygon points="469.6,309.0 469.0,312.6 469.5,316.2 468.9,319.9 469.0,323.5 468.2,327.1 467.9,330.8 468.3,334.4 468.2,338.0 467.8,341.6 467.5,345.2 467.3,348.9 467.0,352.5 466.2,356.1 466.2,359.8 465.8,363.4 465.2,367.0 465.0,370.6 465.0,374.2 464.7,377.9 464.9,381.5 465.0,385.1 464.2,388.8 464.5,392.4 463.8,396.0 468.7,396.0 469.2,392.4 468.9,388.8 469.6,385.1 469.2,381.5 469.7,377.9 470.2,374.2 470.5,370.6 470.8,367.0 470.7,363.4 470.3,359.8 471.3,356.1 471.4,352.5 471.4,348.9 472.0,345.2 472.3,341.6 472.2,338.0 471.9,334.4 472.1,330.8 472.4,327.1 472.6,323.5 472.9,319.9 473.8,316.2 474.0,312.6 473.7,309.0"/>
<polygon points="477.9,318.5 478.2,322.1 477.3,325.7 477.1,329.3 477.5,332.9 477.0,336.5 476.2,340.1 475.9,343.7 475.7,347.3 476.3,350.9 476.0,354.5 475.0,358.1 475.6,361.8 475.5,365.4 474.9,369.0 474.4,372.6 474.4,376.2 473.7,379.8 473.3,383.4 474.2,387.0 473.6,390.6 473.2,394.2 473.5,397.8 472.7,401.4 472.5,405.0 479.0,405.0 478.8,401.4 479.3,397.8 479.0,394.2 479.7,390.6 479.9,387.0 480.1,383.4 480.8,379.8 480.4,376.2 481.1,372.6 481.0,369.0 481.0,365.4 481.1,361.8 481.9,358.1 481.2,354.5 481.7,350.9 481.7,347.3 482.3,343.7 482.1,340.1 482.4,336.5 482.5,332.9 482.7,329.3 483.5,325.7 483.8,322.1 483.5,318.5"/>
<polygon points="489.2,327.8 488.3,331.4 488.9,334.9 487.8,338.4 487.9,342.0 487.8,345.6 487.3,349.1 486.7,352.7 486.6,356.2 486.3,359.8 486.2,363.3 485.1,366.9 485.3,370.4 484.6,373.9 484.3,377.5 484.6,381.1 483.9,384.6 483.7,388.1 483.6,391.7 483.4,395.2 482.6,398.8 482.4,402.4 482.0,405.9 481.6,409.4 481.3,413.0 490.1,413.0 490.6,409.4 490.3,405.9 491.4,402.4 491.5,398.8 491.7,395.2 491.3,391.7 491.8,388.1 491.9,384.6 492.6,381.1 492.5,377.5 492.8,373.9 493.9,370.4 494.3,366.9 494.1,363.3 494.1,359.8 495.1,356.2 495.3,352.7 495.4,349.1 496.0,345.6 495.8,342.0 496.1,338.4 496.3,334.9 496.9,331.4 496.9,327.8"/>
<polygon points="503.8,337.0 504.1,340.6 503.6,344.2 504.5,347.8 504.7,351.4 504.0,355.1 504.9,358.7 504.4,362.3 504.6,365.9 505.2,369.5 505.2,373.1 504.5,376.7 504.9,380.4 505.1,384.0 505.0,387.6 505.0,391.2 505.2,394.8 505.7,398.4 505.1,402.0 505.7,405.6 505.7,409.2 505.4,412.9 505.8,416.5 506.2,420.1 506.2,423.7 515.1,423.7 514.8,420.1 514.8,416.5 513.8,412.9 513.6,409.2 514.0,405.6 513.6,402.0 513.7,398.4 512.6,394.8 512.5,391.2 512.8,387.6 512.7,384.0 511.9,380.4 511.3,376.7 511.2,373.1 511.5,369.5 510.4,365.9 510.4,362.3 509.9,358.7 510.6,355.1 510.2,351.4 510.1,347.8 508.8,344.2 509.1,340.6 508.8,337.0"/>
<polygon points="520.9,344.8 520.4,348.3 521.4,351.9 521.0,355.4 521.2,358.9 520.4,362.4 521.3,366.0 520.4,369.5 521.3,373.0 520.8,376.6 520.7,380.1 521.0,383.6 521.4,387.1 520.6,390.7 520.5,394.2 520.9,397.7 520.6,401.2 520.5,404.8 520.5,408.3 520.4,411.8 520.6,415.4 520.7,418.9 520.7,422.4 521.2,425.9 520.7,429.5 520.9,433.0 528.8,433.0 528.9,429.5 528.9,425.9 529.0,422.4 528.4,418.9 529.1,415.4 528.7,411.8 528.4,408.3 528.3,404.8 528.7,401.2 528.3,397.7 528.2,394.2 528.5,390.7 527.7,387.1 528.5,383.6 528.0,380.1 527.6,376.6 528.0,373.0 528.1,369.5 527.3,366.0 527.5,362.4 527.2,358.9 527.5,355.4 527.2,351.9 527.5,348.3 527.5,344.8"/>
<polygon points="537.3,351.9 537.2,355.5 537.1,359.2 536.8,362.8 536.9,366.4 536.8,370.0 537.6,373.7 537.0,377.3 536.9,380.9 536.8,384.6 537.7,388.2 537.7,391.8 537.5,395.4 537.1,399.1 537.0,402.7 537.1,406.3 537.3,410.0 536.9,413.6 537.2,417.2 537.0,420.9 537.8,424.5 537.8,428.1 537.4,431.7 537.0,435.4 537.3,439.0 544.2,439.0 544.6,435.4 544.4,431.7 544.3,428.1 544.4,424.5 544.1,420.9 544.1,417.2 543.7,413.6 543.7,410.0 543.4,406.3 543.4,402.7 543.7,399.1 543.3,395.4 543.5,391.8 543.2,388.2 543.7,384.6 543.3,380.9 543.6,377.3 543.6,373.7 543.4,370.0 543.0,366.4 543.3,362.8 543.2,359.2 543.9,355.5 543.4,351.9"/>
<polygon points="554.4,358.0 554.3,361.6 554.2,365.1 554.9,368.7 553.9,372.3 554.5,375.9 554.4,379.4 553.7,383.0 554.5,386.6 554.5,390.2 554.2,393.8 554.3,397.3 554.3,400.9 553.6,404.5 554.0,408.1 553.9,411.6 554.2,415.2 554.1,418.8 554.1,422.4 553.8,425.9 554.1,429.5 553.9,433.1 553.8,436.6 553.3,440.2 553.6,443.8 560.4,443.8 560.1,440.2 560.7,436.6 560.1,433.1 559.9,429.5 560.1,425.9 560.7,422.4 559.9,418.8 560.6,415.2 560.4,411.6 560.4,408.1 560.7,404.5 560.7,400.9 559.9,397.3 560.4,393.8 560.6,390.2 560.5,386.6 560.5,383.0 560.5,379.4 560.8,375.9 560.0,372.3 560.2,368.7 560.0,365.1 559.9,361.6 560.4,358.0"/>
<polygon points="497.1,372.6 499.9,410 493.2,410"/>
<path d="M488 372 l2.2 -5 l0.8 6 z M507.5 392 l1.5 -6 l1 7 z M524 396 l1.6 -4 l0.6 5 z" fill="#bd7a29"/>
</g>
<!-- bolt head -->
<use href="#headShape" fill="#340a9c"/>
<ellipse cx="547.3" cy="253" rx="84" ry="45.6" fill="#3b0aae"/>
<!-- hole -->
<ellipse cx="547" cy="266" rx="61.2" ry="35.5" fill="#0a04f2" stroke="#cf8cf0" stroke-width="0.8"/>

<!-- wireframe planes -->

<g clip-path="url(#cpHead)"><use href="#wire" stroke="#b666c8" stroke-width="0.6"/></g>
<!-- reference curves -->
<g fill="none" stroke="#5a98ee" stroke-width="0.9">
<path d="M463 288 C466 282 471 276 476 272 C486 263 499 256 515 250.5 C535 243 555 238.5 573 236 C590 233.5 604 232.3 616 232"/>
<path d="M485.6 256 L485.5 298"/><path d="M485.5 298 L485.2 313.5" stroke="#4a58b8"/>
<path d="M605.8 269.5 L605.8 303" stroke="#56a0c8"/>
<path d="M495 305 A60 36 0 0 1 592 302"/>
</g>
<g fill="none" stroke="#6fa321" stroke-width="0.9">
<path d="M616 232 L664.3 235.6 L664.3 177.5" stroke="#86962a" stroke-width="0.8"/>
<path d="M485.2 313.5 L484.6 322" stroke="#9c8a2a"/>
</g>
<path d="M453.4 251.2 L486.3 256.3" stroke="#43b02c" stroke-width="2.2" fill="none"/>
</svg>
</div>
<div id="viewtb" class="abs">
<svg id="s-viewtb" width="211.8" height="14" viewBox="450.5 83.6 211.8 14">
<g transform="translate(456.6 90.4)"><rect x="-3.2" y="-3.2" width="6.4" height="6.4" fill="#f9fafa" stroke="#5d6569" stroke-width="0.7"/><circle r="1.6" fill="none" stroke="#5d6569" stroke-width="0.7"/><path d="M1.2 1.2 l1.6 1.6" fill="none" stroke="#5d6569" stroke-width="0.8"/></g>
<g transform="translate(469.7 90.4)"><circle cx="-0.6" cy="-0.6" r="2.6" fill="#d7ecf6" stroke="#5d6569" stroke-width="0.8"/><path d="M1.4 1.4 l2.2 2.2" fill="none" stroke="#5d6569" stroke-width="1.1"/><path d="M-2 -0.6 h2.8 M-0.6 -2 v2.8" fill="none" stroke="#2f7fa8" stroke-width="0.8"/></g>
<g transform="translate(482.8 90.4)"><circle cx="-0.6" cy="-0.6" r="2.6" fill="#d7ecf6" stroke="#5d6569" stroke-width="0.8"/><path d="M1.4 1.4 l2.2 2.2" fill="none" stroke="#5d6569" stroke-width="1.1"/><path d="M-2 -0.6 h2.8" fill="none" stroke="#2f7fa8" stroke-width="0.8"/></g>
<g transform="translate(496.0 90.4)"><path d="M-3.2 -3 h6.4 v6 h-6.4 z" fill="#eef6fa" stroke="#4a8db0" stroke-width="0.7"/><path d="M-3.2 3 l6.4 -6 v6 z" fill="#4a8db0"/></g>
<g transform="translate(509.2 90.4)"><path d="M-3.4 2.6 l5.6 -5.2 l1 1 l-5.6 5.2 z" fill="#6a7074"/><path d="M1.4 0.8 l2.4 2.4" fill="none" stroke="#c0392b" stroke-width="1"/><path d="M2.0 3.6 h2.0 l-1.0 1.2 z" fill="#333"/></g>
<g transform="translate(522.3 90.4)"><path d="M-3 -1.6 l1.6 -1.6 h4.6 v4.6 l-1.6 1.6 h-4.6 z" fill="#d7ecf6" stroke="#3f7f9f" stroke-width="0.7"/><path d="M-3 -1.6 h4.6 v4.6 M1.6 -1.6 l1.6 -1.6" fill="none" stroke="#3f7f9f" stroke-width="0.6"/><path d="M2.2 3.8 h2.0 l-1.0 1.2 z" fill="#333"/></g>
<g transform="translate(535.5 90.4)"><rect x="-3.4" y="-3.4" width="5.4" height="5.4" fill="#d7ecf6" stroke="#3f7f9f" stroke-width="0.7"/><circle cx="1" cy="1" r="2.2" fill="#eef6fa" stroke="#5d6569" stroke-width="0.7"/><path d="M2.6 2.6 l1.4 1.4" fill="none" stroke="#5d6569" stroke-width="0.9"/></g>
<g transform="translate(548.7 90.4)"><rect x="-3.4" y="-3.0" width="6.8" height="6.0" fill="#70787c"/><rect x="-2.4" y="-2.0" width="3.0" height="2.4" fill="#d7ecf6"/><rect x="0.2" y="0.6" width="2.6" height="1.8" fill="#e9b45a"/></g>
<g transform="translate(561.9 90.4)"><rect x="-3.0" y="-3.2" width="5.0" height="5.0" fill="#a9d6ec" stroke="#3f7f9f" stroke-width="0.6"/><rect x="-1.4" y="-1.6" width="5.0" height="5.0" fill="#7fbcdc" stroke="#3f7f9f" stroke-width="0.6"/></g>
<g transform="translate(575.0 90.4)"><path d="M-3.2 -3 h6.4 v6 h-6.4 z" fill="#f6f8f9" stroke="#5d6569" stroke-width="0.6"/><path d="M-3.2 3 l6.4 -6" fill="none" stroke="#5d6569" stroke-width="0.8"/><path d="M1 1 l2.4 2.4" fill="none" stroke="#2f7fa8" stroke-width="0.9"/></g>
<g transform="translate(588.2 90.4)"><path d="M-2.8 -3.2 l2 2.6 M-0.4 -0.2 l1.6 -2.4 M-2.4 1.2 h3.6" fill="none" stroke="#7a8084" stroke-width="0.7"/><path d="M0.6 0.8 l2.6 1 l-1.2 0.4 l0.9 1.4 l-0.6 0.3 l-0.9 -1.4 l-0.8 0.8 z" fill="#c08a2a"/></g>
<rect x="596.2" y="84.2" width="11.6" height="12.6" fill="#dfe2e3" stroke="#8f9599" stroke-width="0.7"/>
<g transform="translate(602.0 90.4)"><rect x="-2.8" y="-2.8" width="5.0" height="5.4" fill="#f6f8f9" stroke="#5d6569" stroke-width="0.7"/><path d="M-1.6 -1.2 h2.6 M-1.6 0.4 h2.6" fill="none" stroke="#5d6569" stroke-width="0.6"/><path d="M0.2 1 l3 1.2 l-1.4 0.4 l0.8 1.4 l-0.7 0.3 l-0.8 -1.4 l-0.9 0.8 z" fill="#333"/></g>
<g transform="translate(615.4 90.4)"><path d="M-3 -2.4 l3 2.4 l-3 2.4 M0 0 h3.4" fill="none" stroke="#c0392b" stroke-width="0.9"/><circle cx="-3" cy="-2.4" r="0.9" fill="#2f7fa8"/><circle cx="-3" cy="2.4" r="0.9" fill="#2f7fa8"/><circle cx="3.2" cy="0" r="0.9" fill="#2f7fa8"/></g>
<g transform="translate(628.6 90.4)"><path d="M0 -3.2 l3.4 6 h-6.8 z" fill="#e4e7e8" stroke="#858b8f" stroke-width="0.7"/><path d="M0 -1 v2.2" fill="none" stroke="#858b8f" stroke-width="0.7"/></g>
<g transform="translate(642.0 90.4)"><rect x="-2.2" y="-2.8" width="1.6" height="5.6" fill="#9a9fa2"/><rect x="0.8" y="-2.8" width="1.6" height="5.6" fill="#9a9fa2"/></g>
<g transform="translate(655.2 90.4)"><rect x="-3.6" y="-2.6" width="7.0" height="5.2" fill="#eceeef" stroke="#b1b5b7" stroke-width="0.6"/><path d="M-2.4 -1 h3 M-2.4 0.6 h3" fill="none" stroke="#b1b5b7" stroke-width="0.6"/><path d="M1.4 -1.6 l1.8 1.6 l-1.8 1.6" fill="none" stroke="#9a9fa2" stroke-width="0.7"/></g>
</svg>
</div>
<div id="dialog" class="abs"><div id="dlg-title" class="abs"></div>
<svg id="s-dialog" width="368" height="168" viewBox="560 303 368 168">
<text x="744.0" y="312.6" font-size="6.2" fill="#a3a7a9" text-anchor="middle" textLength="42.0" lengthAdjust="spacingAndGlyphs">チェック結果一覧</text>
<text x="563.0" y="332.6" font-size="6.4" fill="#3f4345" textLength="126.5" lengthAdjust="spacingAndGlyphs">チェック結果名 : CHECKRESULT_20250509174520</text>
<rect x="902.6" y="328.8" width="22.6" height="10.6" fill="#fdfdfd" stroke="#c9cdcf" stroke-width="0.8" rx="0.8"/><text x="913.9" y="336.4" font-size="6.3" fill="#3f4345" text-anchor="middle" textLength="11.6" lengthAdjust="spacingAndGlyphs">保存</text>
<rect x="564.0" y="343.4" width="360.8" height="101.6" fill="#ffffff" stroke="#d3d6d8" stroke-width="0.8"/>
<rect x="564.4" y="343.8" width="8.0" height="100.8" fill="#d9dadb"/>
<rect x="572.4" y="343.8" width="352.0" height="10.6" fill="#f6f7f7"/>
<path d="M572.4 354.4 H924.4" fill="none" stroke="#e1e3e4" stroke-width="0.6"/>
<rect x="572.4" y="354.6" width="352.0" height="11.6" fill="#b4e2f6"/>
<path d="M606.0 344.6 V353.8" fill="none" stroke="#dcdfe0" stroke-width="0.8"/>
<path d="M639.5 344.6 V353.8" fill="none" stroke="#dcdfe0" stroke-width="0.8"/>
<path d="M691.7 344.6 V353.8" fill="none" stroke="#dcdfe0" stroke-width="0.8"/>
<path d="M756.0 344.6 V353.8" fill="none" stroke="#dcdfe0" stroke-width="0.8"/>
<path d="M820.0 344.6 V353.8" fill="none" stroke="#dcdfe0" stroke-width="0.8"/>
<path d="M866.0 344.6 V353.8" fill="none" stroke="#dcdfe0" stroke-width="0.8"/>
<path d="M899.4 344.6 V353.8" fill="none" stroke="#dcdfe0" stroke-width="0.8"/>
<text x="575.0" y="351.5" font-size="6.3" fill="#3f4345" textLength="6.6" lengthAdjust="spacingAndGlyphs">ID</text>
<text x="608.6" y="351.5" font-size="6.3" fill="#3f4345" textLength="25.0" lengthAdjust="spacingAndGlyphs">違反種別</text>
<text x="641.8" y="351.5" font-size="6.3" fill="#3f4345" textLength="14.6" lengthAdjust="spacingAndGlyphs">ルール</text>
<text x="694.2" y="351.5" font-size="6.3" fill="#3f4345" textLength="20.0" lengthAdjust="spacingAndGlyphs">ルール名</text>
<text x="759.0" y="351.5" font-size="6.3" fill="#3f4345" textLength="12.2" lengthAdjust="spacingAndGlyphs">詳細</text>
<text x="823.4" y="351.5" font-size="6.3" fill="#3f4345" textLength="18.0" lengthAdjust="spacingAndGlyphs">基準値</text>
<text x="868.6" y="351.5" font-size="6.3" fill="#3f4345" textLength="18.0" lengthAdjust="spacingAndGlyphs">測定値</text>
<text x="901.6" y="351.5" font-size="6.3" fill="#3f4345" textLength="25.0" lengthAdjust="spacingAndGlyphs">参考資料</text>
<text x="566.6" y="362.9" font-size="6.3" fill="#3f4345" textLength="3.2" lengthAdjust="spacingAndGlyphs">1</text>
<text x="574.6" y="362.9" font-size="6.3" fill="#3f4345" textLength="24.2" lengthAdjust="spacingAndGlyphs">ID0001_1</text>
<text x="608.0" y="362.9" font-size="6.3" fill="#3f4345" textLength="24.6" lengthAdjust="spacingAndGlyphs">Violation</text>
<text x="641.6" y="362.9" font-size="6.3" fill="#3f4345" textLength="46.6" lengthAdjust="spacingAndGlyphs">穴と端部の距離(ソ</text>
<text x="693.8" y="362.9" font-size="6.3" fill="#3f4345" textLength="61.0" lengthAdjust="spacingAndGlyphs">穴と端部の距離(ソリッド)</text>
<text x="822.4" y="362.9" font-size="6.3" fill="#3f4345" textLength="15.4" lengthAdjust="spacingAndGlyphs">L ≥ 30</text>
<text x="867.8" y="362.9" font-size="6.3" fill="#3f4345" textLength="23.4" lengthAdjust="spacingAndGlyphs">2.900000</text>
<text x="901.4" y="362.9" font-size="6.3" fill="#3f4345" textLength="22.4" lengthAdjust="spacingAndGlyphs">HoleEdg</text>
<text x="566.6" y="374.7" font-size="6.3" fill="#3f4345" textLength="3.2" lengthAdjust="spacingAndGlyphs">2</text>
<text x="574.6" y="374.7" font-size="6.3" fill="#3f4345" textLength="24.2" lengthAdjust="spacingAndGlyphs">ID0001_2</text>
<text x="608.0" y="374.7" font-size="6.3" fill="#3f4345" textLength="24.6" lengthAdjust="spacingAndGlyphs">Violation</text>
<text x="641.6" y="374.7" font-size="6.3" fill="#3f4345" textLength="46.6" lengthAdjust="spacingAndGlyphs">穴と端部の距離(ソ</text>
<text x="693.8" y="374.7" font-size="6.3" fill="#3f4345" textLength="61.0" lengthAdjust="spacingAndGlyphs">穴と端部の距離(ソリッド)</text>
<text x="822.4" y="374.7" font-size="6.3" fill="#3f4345" textLength="15.4" lengthAdjust="spacingAndGlyphs">L ≥ 30</text>
<text x="867.8" y="374.7" font-size="6.3" fill="#3f4345" textLength="23.4" lengthAdjust="spacingAndGlyphs">0.000000</text>
<text x="901.4" y="374.7" font-size="6.3" fill="#3f4345" textLength="22.4" lengthAdjust="spacingAndGlyphs">HoleEdg</text>
<text x="566.6" y="386.3" font-size="6.3" fill="#3f4345" textLength="3.2" lengthAdjust="spacingAndGlyphs">3</text>
<text x="574.6" y="386.3" font-size="6.3" fill="#3f4345" textLength="24.2" lengthAdjust="spacingAndGlyphs">ID0001_3</text>
<text x="608.0" y="386.3" font-size="6.3" fill="#3f4345" textLength="24.6" lengthAdjust="spacingAndGlyphs">Violation</text>
<text x="641.6" y="386.3" font-size="6.3" fill="#3f4345" textLength="46.6" lengthAdjust="spacingAndGlyphs">穴と端部の距離(ソ</text>
<text x="693.8" y="386.3" font-size="6.3" fill="#3f4345" textLength="61.0" lengthAdjust="spacingAndGlyphs">穴と端部の距離(ソリッド)</text>
<text x="822.4" y="386.3" font-size="6.3" fill="#3f4345" textLength="15.4" lengthAdjust="spacingAndGlyphs">L ≥ 30</text>
<text x="867.8" y="386.3" font-size="6.3" fill="#3f4345" textLength="23.4" lengthAdjust="spacingAndGlyphs">0.000000</text>
<text x="901.4" y="386.3" font-size="6.3" fill="#3f4345" textLength="22.4" lengthAdjust="spacingAndGlyphs">HoleEdg</text>
<rect x="920.6" y="343.8" width="3.8" height="93.4" fill="#ececed"/>
<rect x="572.4" y="437.2" width="352.0" height="7.4" fill="#dcdddd"/>
<rect x="572.4" y="437.2" width="7.4" height="7.4" fill="#f4f4f4"/>
<path d="M577 439.4 l-1.6 1.5 l1.6 1.5 z" fill="#6a6e70"/>
<rect x="580.0" y="437.6" width="210.0" height="6.6" fill="#f7f7f7" stroke="#c9cbcc" stroke-width="0.5"/>
<rect x="916.6" y="437.2" width="7.8" height="7.4" fill="#f4f4f4"/>
<path d="M919.6 439.4 l1.6 1.5 l-1.6 1.5 z" fill="#6a6e70"/>
<rect x="563.2" y="457.2" width="34.4" height="11.2" fill="#fdfdfd" stroke="#c9cdcf" stroke-width="0.8" rx="0.8"/><text x="580.4" y="465.1" font-size="6.3" fill="#3f4345" text-anchor="middle" textLength="23.6" lengthAdjust="spacingAndGlyphs">結果読込</text>
<rect x="609.4" y="457.2" width="35.0" height="11.2" fill="#fdfdfd" stroke="#c9cdcf" stroke-width="0.8" rx="0.8"/><text x="626.9" y="465.1" font-size="6.3" fill="#3f4345" text-anchor="middle" textLength="23.6" lengthAdjust="spacingAndGlyphs">参考資料</text>
<rect x="654.4" y="457.2" width="32.2" height="11.2" fill="#fdfdfd" stroke="#c9cdcf" stroke-width="0.8" rx="0.8"/><text x="670.5" y="465.1" font-size="6.3" fill="#3f4345" text-anchor="middle" textLength="22.6" lengthAdjust="spacingAndGlyphs">CSV出力</text>
<rect x="899.6" y="457.2" width="25.4" height="11.2" fill="#fdfdfd" stroke="#c9cdcf" stroke-width="0.8" rx="0.8"/><text x="912.3" y="465.1" font-size="6.3" fill="#3f4345" text-anchor="middle" textLength="16.0" lengthAdjust="spacingAndGlyphs">閉じる</text>
<path d="M620.4 455.8 v8.4 l2 -1.8 l1.5 3.2 l1.5 -0.7 l-1.5 -3.1 h2.7 z" fill="#b6e31c" stroke="#5d7a10" stroke-width="0.5"/>
</svg>
</div>
<div id="statusbar" class="abs">
<svg id="s-status" width="965" height="15" viewBox="0 503 965 15">
<rect x="0.0" y="505.6" width="8.6" height="12.0" fill="#dfe2e3" stroke="#aeb3b6" stroke-width="0.6"/>
<path d="M1.4 509 h3 v6 M1.4 512 h2 M5.6 513 h2.4 v3" fill="none" stroke="#3a3e40" stroke-width="0.9"/>
<circle cx="18.2" cy="512.6" r="3.2" fill="#7fb6d8" stroke="#3f7fa5" stroke-width="0.6"/>
<path d="M15 514.8 l3.4 -3.8 l3 1.6" fill="none" stroke="#e9b45a" stroke-width="0.8"/>
<rect x="27.6" y="508.2" width="8.0" height="8.0" fill="#e3f1f8" stroke="#7e8a90" stroke-width="0.7"/>
<path d="M42 505.5 V517" fill="none" stroke="#cfd3d4" stroke-width="0.8"/>
<circle cx="46.6" cy="510.6" r="0.9" fill="#2f6f9a"/>
<text x="51.3" y="513.0" font-size="6.2" fill="#45494b" textLength="93.2" lengthAdjust="spacingAndGlyphs">17:45 フィーチャーの再定義が終了しました。</text>
<path d="M757.4 505.5 V517" fill="none" stroke="#cfd3d4" stroke-width="0.8"/>
<rect x="761.2" y="507.6" width="3.0" height="6.4" fill="#3f4345" rx="0.9"/>
<rect x="765.4" y="507.6" width="3.0" height="6.4" fill="#3f4345" rx="0.9"/>
<rect x="763.6" y="508.6" width="2.2" height="2.2" fill="#6a6e70"/>
<path d="M773.3 510.6 h2.6 l-1.3 1.6 z" fill="#4a4d4e"/>
<path d="M780.2 505.5 V517" fill="none" stroke="#cfd3d4" stroke-width="0.8"/>
<rect x="784.2" y="507.6" width="7.6" height="6.4" fill="none" stroke="#5d6569" stroke-width="0.8" stroke-dasharray="1.4 1"/>
<path d="M796.1 510.6 h2.6 l-1.3 1.6 z" fill="#4a4d4e"/>
<rect x="803.6" y="507.2" width="7.0" height="7.2" fill="#e3e5e6" stroke="#bfc3c5" stroke-width="0.6"/>
<path d="M805 509 h4 M805 510.8 h4 M805 512.6 h4" fill="none" stroke="#b4b8ba" stroke-width="0.6"/>
<rect x="814.6" y="504.6" width="19.6" height="14.0" fill="#f4f5f5" stroke="#c3c7c9" stroke-width="0.8"/>
<rect x="820.6" y="508.4" width="6.6" height="6.2" fill="#eef3f5" stroke="#5d6569" stroke-width="0.7"/>
<rect x="822.6" y="510.2" width="4.6" height="4.6" fill="#d3ecf6" stroke="#3f7fa5" stroke-width="0.6"/>
<text x="836.6" y="513.2" font-size="6.3" fill="#45494b" textLength="26.6" lengthAdjust="spacingAndGlyphs">3 個を選択</text>
<rect x="880.4" y="505.0" width="84.0" height="13.6" fill="#fdfdfd" stroke="#c3c7c9" stroke-width="0.8"/>
<text x="884.4" y="513.4" font-size="6.3" fill="#45494b" textLength="22.0" lengthAdjust="spacingAndGlyphs">ジオメトリ</text>
<path d="M955.6 505 V518.6" fill="none" stroke="#c3c7c9" stroke-width="0.8"/>
<path d="M958.5 510.6 h3.4 l-1.7 2.0 z" fill="#4a4d4e"/>
</svg>
</div>
<svg id="s-overlay" width="965" height="518" viewBox="0 0 965 518">
<circle cx="-1.2" cy="259.2" r="4" fill="#ffffff" stroke="#4d4f50" stroke-width="1.7"/>
<circle cx="483.2" cy="520.6" r="4" fill="#ffffff" stroke="#4d4f50" stroke-width="1.7"/>
<circle cx="483.5" cy="-1.2" r="4" fill="#ffffff" stroke="#4d4f50" stroke-width="1.7"/>
</svg>
</body>
</html>
